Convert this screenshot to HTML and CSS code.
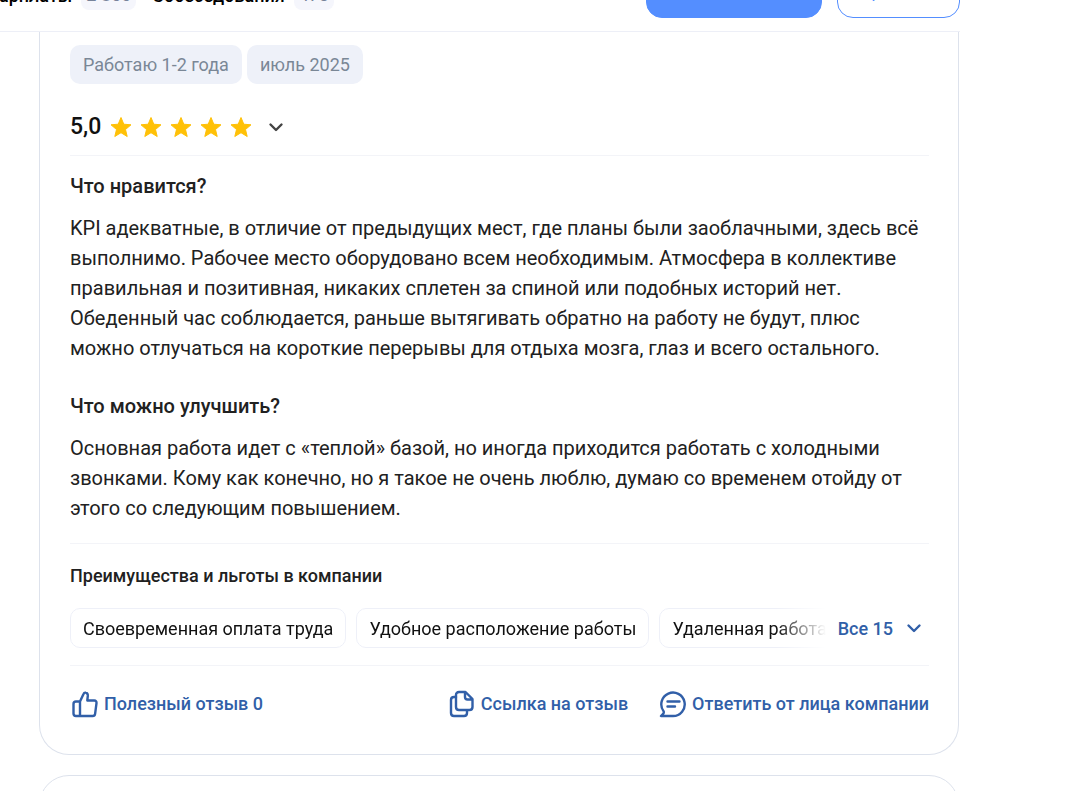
FILE: index.html
```html
<!DOCTYPE html>
<html lang="ru">
<head>
    <meta charset="UTF-8">
    <meta name="viewport" content="width=device-width, initial-scale=1.0">
    <title>Отзывы о компании</title>
    <link rel="stylesheet" href="styles.css">
</head>
<body>
    <svg class="sprite" aria-hidden="true">
        <symbol id="star" viewBox="0 0 24 24">
            <path d="M12 2.500l2.800 6.700 7.200.6-5.500 4.700L18.200 21.500 12 17.700l-6.200 3.800 1.700-7L2 9.800l7.200-.6z" fill="#ffc107" stroke="#ffc107" stroke-width="1" stroke-linejoin="round"/>
        </symbol>
        <symbol id="chevron" viewBox="0 0 16 16">
            <path d="M2.500 5.500L8 11l5.500-5.500" fill="none" stroke="currentColor" stroke-width="2.400" stroke-linecap="round" stroke-linejoin="round"/>
        </symbol>
    </svg>

    <header class="header">
        <nav class="tabs">
            <a class="tab" href="#salaries">Зарплаты <span class="tab-count">2 850</span></a>
            <a class="tab" href="#interviews">Собеседования <span class="tab-count">473</span></a>
        </nav>
        <div class="header-buttons">
            <button class="btn btn-primary" type="button">Оставить отзыв</button>
            <button class="btn btn-outline" type="button">Сравнить</button>
        </div>
    </header>

    <main class="reviews">
        <article class="review">
            <div class="tags">
                <span class="tag">Работаю 1-2 года</span>
                <span class="tag">июль 2025</span>
            </div>

            <div class="rating">
                <span class="rating-value">5,0</span>
                <div class="stars" role="img" aria-label="5 из 5">
                    <svg><use href="#star"/></svg>
                    <svg><use href="#star"/></svg>
                    <svg><use href="#star"/></svg>
                    <svg><use href="#star"/></svg>
                    <svg><use href="#star"/></svg>
                </div>
                <button class="rating-toggle" type="button" aria-label="Показать оценки">
                    <svg class="chevron"><use href="#chevron"/></svg>
                </button>
            </div>

            <section class="review-text">
                <h3>Что нравится?</h3>
                <p>KPI адекватные, в отличие от предыдущих мест, где планы были заоблачными, здесь всё выполнимо. Рабочее место оборудовано всем необходимым. Атмосфера в коллективе правильная и позитивная, никаких сплетен за спиной или подобных историй нет. Обеденный час соблюдается, раньше вытягивать обратно на работу не будут, плюс можно отлучаться на короткие перерывы для отдыха мозга, глаз и всего остального.</p>
                <h3>Что можно улучшить?</h3>
                <p>Основная работа идет с «теплой» базой, но иногда приходится работать с холодными звонками. Кому как конечно, но я такое не очень люблю, думаю со временем отойду от этого со следующим повышением.</p>
            </section>

            <section class="benefits">
                <h4>Преимущества и льготы в компании</h4>
                <div class="benefits-row">
                    <ul class="benefits-list">
                        <li>Своевременная оплата труда</li>
                        <li>Удобное расположение работы</li>
                        <li>Удаленная работа</li>
                    </ul>
                    <button class="benefits-all" type="button">
                        Все 15
                        <svg class="chevron"><use href="#chevron"/></svg>
                    </button>
                </div>
            </section>

            <footer class="actions">
                <button class="action action-useful" type="button">
                    <svg viewBox="0 0 28 28">
                        <path d="M10 11.500l3.400-7.300c.5-1.200 1.400-1.800 2.400-1.500 1.500.4 2.100 1.600 2 3.200l-.5 4.600h7c1.500 0 2.400 1.200 2.200 2.600l-1.400 10.700c-.2 1.400-1 2.200-2.400 2.200H6c-1.600 0-2.500-.9-2.500-2.500V14c0-1.600.9-2.500 2.500-2.500zM10 11.500V26"/>
                    </svg>
                    Полезный отзыв 0
                </button>
                <a class="action" href="#review">
                    <svg viewBox="0 0 28 28">
                        <path d="M12 2h6.500L25.500 9v8c0 1.800-1.200 3-3 3H12c-1.800 0-3-1.200-3-3V5c0-1.800 1.200-3 3-3zM18 2.500V7c0 1.500.8 2.500 2.500 2.500h4.500"/>
                        <path d="M9 7H7c-1.800 0-3 1.200-3 3v13c0 1.800 1.200 3 3 3h10c1.800 0 3-1.200 3-3v-2.500"/>
                    </svg>
                    Ссылка на отзыв
                </a>
                <button class="action" type="button">
                    <svg viewBox="0 0 28 28">
                        <path d="M3 26H15a11.700 11.700 0 1 0-9.500-4.900c.6 1 .3 1.900-.4 2.800zM9.500 11.500H21.500M9.500 16.500h7.500"/>
                    </svg>
                    Ответить от лица компании
                </button>
            </footer>
        </article>

        <article class="review"></article>
    </main>
</body>
</html>
```

FILE: styles.css
```css
* {
    box-sizing: border-box;
}
body {
    margin: 0;
    font-family: Roboto, sans-serif;
    font-size: 18px;
    color: #212121;
    background-color: #fff;
    overflow-x: hidden;
}
body::-webkit-scrollbar {
    display: none;
}
button {
    font-family: inherit;
    cursor: pointer;
}
.sprite {
    display: none;
}
.header {
    display: flex;
    justify-content: space-between;
    align-items: flex-end;
    height: 32px;
    max-width: 960px;
    border-bottom: 1px solid #edeff7;
    overflow: hidden;
}
.tabs {
    display: flex;
    gap: 16px;
    margin-left: -12px;
    padding-bottom: 21px;
}
.tab {
    display: flex;
    align-items: center;
    gap: 9px;
    color: #000;
    font-weight: 500;
    text-decoration: none;
}
.tab-count {
    padding: 0 5px;
    line-height: 30px;
    font-weight: 400;
    color: #77839a;
    background-color: #f5f6fc;
    border-radius: 8px;
}
.header-buttons {
    display: flex;
    gap: 15px;
    padding-bottom: 13px;
}
.btn {
    height: 52px;
    padding: 0 22px;
    font-size: 17px;
    border: 1px solid #548eff;
    border-radius: 16px;
}
.btn-primary {
    padding: 0 23px;
    color: #fff;
    background-color: #548eff;
}
.btn-outline {
    color: #548eff;
    background-color: #fff;
}
.reviews {
    max-width: 960px;
    padding: 0 1px 0 39px;
}
.review {
    min-height: 100px;
    margin-bottom: 20px;
    padding: 13px 29px 36px 30px;
    border: 1px solid #dde2ec;
    border-radius: 30px;
}
.review:first-child {
    border-top: none;
    border-radius: 0 0 30px 30px;
}
.review:last-child {
    margin-bottom: 0;
}
.tags {
    display: flex;
    gap: 5px;
}
.tag {
    padding: 1px 13px 0;
    line-height: 38px;
    color: #7a8796;
    background-color: #eef1f9;
    border-radius: 10px;
}
.rating {
    display: flex;
    align-items: center;
    height: 72px;
    padding-top: 14px;
    border-bottom: 1px solid #f3f4f8;
}
.rating-value {
    font-size: 23px;
    font-weight: 500;
    color: #111;
}
.stars {
    display: flex;
    gap: 6px;
    margin-left: 8px;
}
.stars svg {
    width: 24px;
    height: 24px;
}
.rating-toggle {
    display: flex;
    margin-left: 15px;
    padding: 0;
    border: none;
    background: none;
    color: #444;
}
.chevron {
    width: 16px;
    height: 16px;
}
.review-text {
    padding: 15px 0 20px;
    border-bottom: 1px solid #f3f4f8;
}
.review-text h3 {
    margin: 0 0 12px;
    font-size: 20px;
    line-height: 30px;
    font-weight: 500;
}
.review-text p {
    margin: 0;
    padding-right: 5px;
    font-size: 20px;
    line-height: 30px;
}
.review-text p + h3 {
    margin-top: 28px;
}
.benefits {
    padding: 20px 0 17px;
    border-bottom: 1px solid #f3f4f8;
}
.benefits h4 {
    margin: 0 0 20px;
    font-size: 18px;
    line-height: 24px;
    font-weight: 500;
}
.benefits-row {
    display: flex;
    align-items: center;
}
.benefits-list {
    display: flex;
    flex: 1;
    gap: 10px;
    min-width: 0;
    margin: 0;
    padding: 0;
    list-style: none;
    overflow: hidden;
    -webkit-mask-image: linear-gradient(to left, transparent, #000 50px);
    mask-image: linear-gradient(to left, transparent, #000 50px);
}
.benefits-list li {
    flex-shrink: 0;
    padding: 2px 12px 0;
    line-height: 36px;
    color: #111;
    white-space: nowrap;
    border: 1px solid #eef0f8;
    border-radius: 10px;
}
.benefits-all {
    display: flex;
    align-items: center;
    gap: 13px;
    padding: 0 7px 0 12px;
    font-size: 18px;
    font-weight: 500;
    color: #315fa8;
    border: none;
    background: none;
}
.actions {
    display: flex;
    gap: 30px;
    padding-top: 24px;
}
.action {
    display: flex;
    align-items: center;
    gap: 6px;
    padding: 0;
    font-size: 18px;
    line-height: 28px;
    font-weight: 500;
    color: #315fa8;
    text-decoration: none;
    border: none;
    background: none;
}
.action-useful {
    margin-right: auto;
}
.action svg {
    width: 28px;
    height: 28px;
    fill: none;
    stroke: currentColor;
    stroke-width: 2.4;
    stroke-linecap: round;
    stroke-linejoin: round;
}
```
